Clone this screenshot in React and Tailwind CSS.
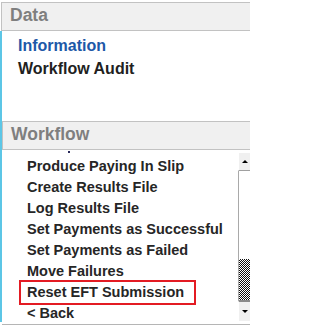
const dataLinks = [
  { label: "Information", className: "text-[#1d58a7]" },
  { label: "Workflow Audit", className: "text-[#221f1f]" },
];

const workflowLinks = [
  "Produce Paying In Slip",
  "Create Results File",
  "Log Results File",
  "Set Payments as Successful",
  "Set Payments as Failed",
  "Move Failures",
  "Reset EFT Submission",
  "< Back",
];

const PanelHeader = ({ title, className }) => {
  return (
    <div
      className={
        "h-[29px] border-y border-l border-[#c2c2c2] bg-[#f0f0f0] pl-[8px] text-[17.5px] font-bold leading-[24px] text-[#7f7f7f] " +
        className
      }
    >
      {title}
    </div>
  );
};

const ScrollBar = () => {
  return (
    <div className="mt-[2px] flex w-[12px] shrink-0 flex-col">
      {/* up button */}
      <div className="flex h-[19px] items-center justify-center border-l border-t border-white border-b border-b-[#a0a0a0] bg-[#f0f0f0]">
        <div className="h-0 w-0 border-x-[3px] border-b-[3px] border-x-transparent border-b-black"></div>
      </div>
      {/* thumb */}
      <div className="h-[88px] border-l border-[#a9a9a9] bg-white"></div>
      {/* track */}
      <div className="h-[41px] border-l border-[#a9a9a9] bg-[repeating-conic-gradient(#111_0_25%,#fff_0_50%)] bg-[length:2px_2px]"></div>
      {/* down button */}
      <div className="flex h-[21px] items-center justify-center border-t-2 border-[#8a8a8a] border-l border-l-white bg-[#f0f0f0]">
        <div className="h-0 w-0 border-x-[3px] border-t-[3px] border-x-transparent border-t-black"></div>
      </div>
    </div>
  );
};

const App = () => {
  return (
    <div className="h-[327px] w-[250px] overflow-hidden bg-white font-['Liberation_Sans',Arial,sans-serif]">
      {/* cut off line above the panel */}
      <div className="h-[2px] overflow-hidden">
        <div className="-mt-[13px] flex whitespace-nowrap text-[14px] font-bold leading-[16px] text-[#111]">
          <span className="ml-[45px]">Account No:</span>
          <span className="ml-[19px]">000751</span>
        </div>
      </div>

      <PanelHeader title="Data" className="ml-[1px]" />

      <div className="border-l-2 border-[#5cc6e6]">
        {/* Data links */}
        <div className="h-[90px] pt-[3px]">
          {dataLinks.map((link) => (
            <div
              key={link.label}
              className={"pl-[16px] text-[16px] font-bold leading-[23px] " + link.className}
            >
              {link.label}
            </div>
          ))}
        </div>

        <PanelHeader title="Workflow" className="" />

        {/* Workflow list */}
        <div className="flex h-[172px]">
          <div className="flex-1 overflow-hidden">
            <div className="h-[5px]">
              <div className="ml-[66px] mt-[1px] h-[2px] w-[2px] bg-[#2a2a5a]"></div>
            </div>
            {workflowLinks.map((label) => (
              <div
                key={label}
                className={
                  "ml-[19px] h-[21px] w-[173px] whitespace-nowrap pl-[6px] text-[14.5px] font-bold leading-[21px] text-[#262626] " +
                  (label === "Reset EFT Submission" ? "outline-2 outline-[#e31b23]" : "")
                }
              >
                {label}
              </div>
            ))}
          </div>
          <ScrollBar />
        </div>
      </div>

      <div className="h-[2px]"></div>
      <div className="ml-[2px] border-t border-[#b5b5b5]"></div>
    </div>
  );
};

export default App;
